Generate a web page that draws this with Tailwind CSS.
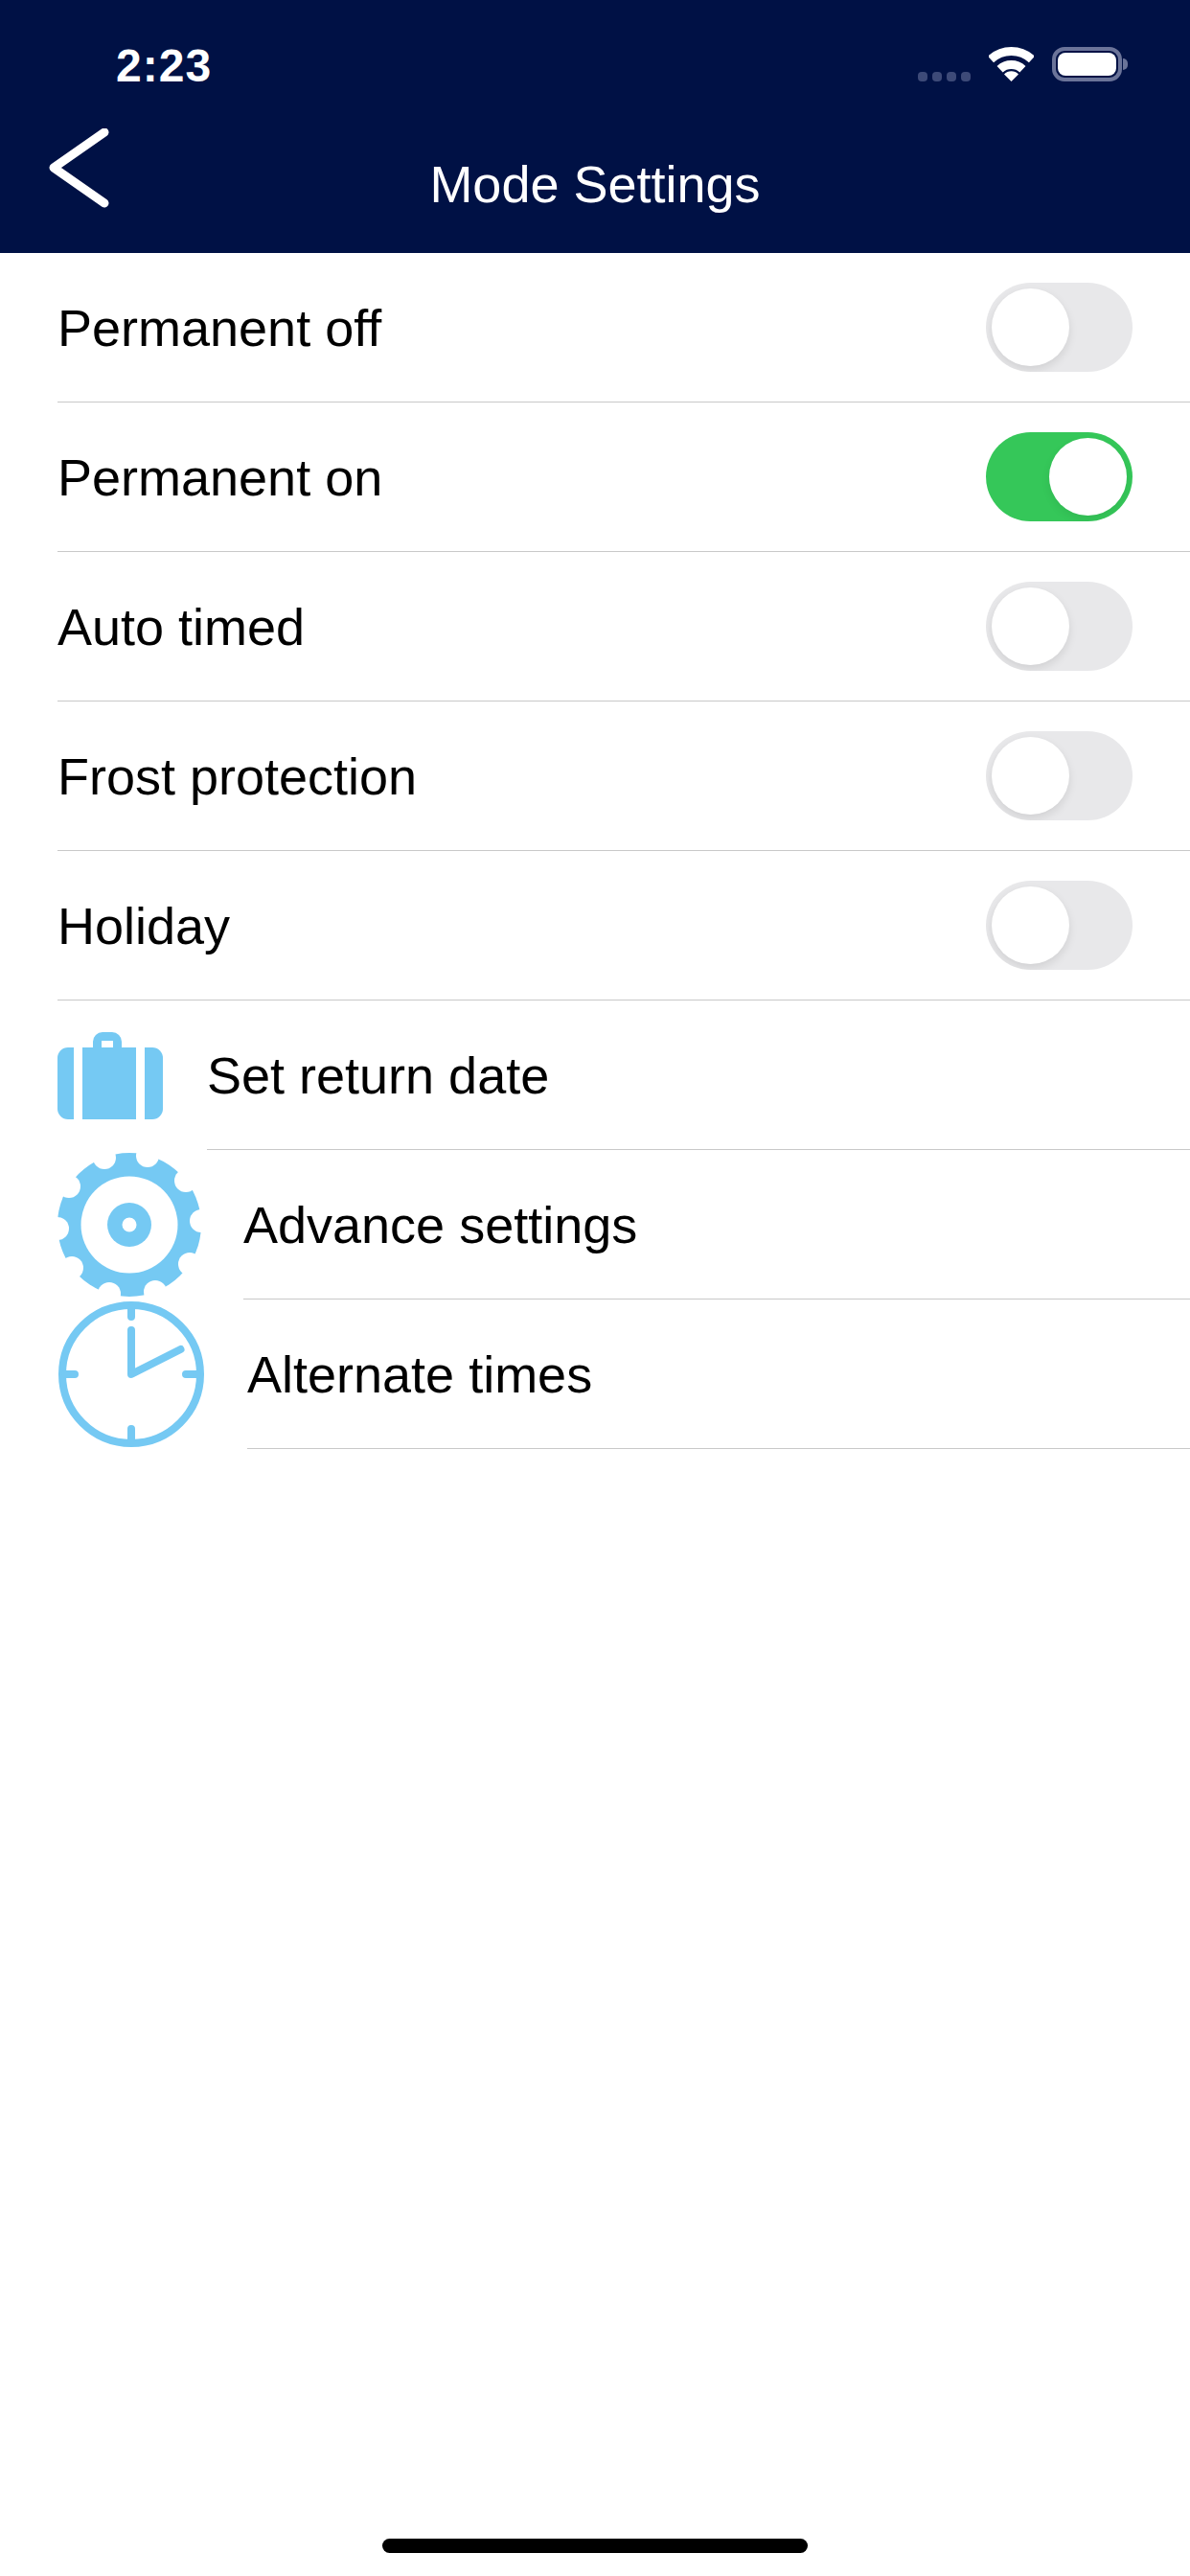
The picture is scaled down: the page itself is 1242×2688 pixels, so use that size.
<!DOCTYPE html>
<html lang="en">
<head>
    <meta charset="UTF-8">
    <meta name="viewport" content="width=device-width, initial-scale=1.0">
    <title>Mode Settings</title>
    <script src="https://cdn.jsdelivr.net/npm/@tailwindcss/browser@4"></script>
</head>
<body class="bg-white font-['Liberation_Sans',Arial,sans-serif] text-black">
    <div class="w-[1242px] h-[2688px] flex flex-col overflow-hidden">
        <!-- status bar + nav -->
        <header class="bg-[#001145] text-white h-[264px] shrink-0 flex flex-col">
            <div class="flex items-center h-[36px] mt-[49px] pl-[121px]">
                <span class="text-[48px] leading-[36px] font-bold tracking-[1px] mt-[4px]">2:23</span>
                <div class="ml-auto flex items-center">
                    <div class="flex gap-[5px] self-end h-[10px] mr-[19px]">
                        <span class="w-[10px] h-[10px] rounded-[4px] bg-[#3d4a78]"></span>
                        <span class="w-[10px] h-[10px] rounded-[4px] bg-[#3d4a78]"></span>
                        <span class="w-[10px] h-[10px] rounded-[4px] bg-[#3d4a78]"></span>
                        <span class="w-[10px] h-[10px] rounded-[4px] bg-[#3d4a78]"></span>
                    </div>
                    <svg class="w-[47px] h-[36px] mr-[19px]" viewBox="0 0 47 36" fill="none">
                        <path d="M2 13A31.5 31.5 0 0 1 45 13" stroke="#fff" stroke-width="9"/>
                        <path d="M11.6 23.2A17.5 17.5 0 0 1 35.4 23.2" stroke="#fff" stroke-width="9"/>
                        <path d="M23.5 36L16 28.5A10.5 10.5 0 0 1 31 28.5Z" fill="#fff"/>
                    </svg>
                    <div class="w-[73px] h-[36px] rounded-[13px] border-[4px] border-[#6b7499] p-[2px] flex">
                        <div class="flex-1 bg-white rounded-[8px]"></div>
                    </div>
                    <div class="w-[5px] h-[12px] bg-[#6b7499] rounded-r-[6px] ml-[1px] mr-[65px]"></div>
                </div>
            </div>
            <div class="grid grid-cols-[1fr_auto_1fr] mt-[49px]">
                <svg class="w-[72px] h-[90px] ml-[47px]" viewBox="0 0 72 90" fill="none">
                    <path d="M62 4L9 41L62 78" stroke="#fff" stroke-width="9" stroke-linecap="round" stroke-linejoin="round"/>
                </svg>
                <h1 class="text-[54px] leading-[62px] font-normal mt-[27px]">Mode Settings</h1>
                <div></div>
            </div>
        </header>

        <!-- toggle rows -->
        <div class="h-[156px] ml-[60px] border-b-[1.5px] border-[#c9c9c9] flex items-center pr-[60px]">
            <span class="text-[54px] pt-[2px]">Permanent off</span>
            <div class="ml-auto w-[153px] h-[93px] rounded-full bg-[#e8e8ea] overflow-hidden flex items-center justify-start px-[6px]">
                <div class="w-[81px] h-[81px] rounded-full bg-white shadow-[0_4px_10px_rgba(0,0,0,0.1)]"></div>
            </div>
        </div>
        <div class="h-[156px] ml-[60px] border-b-[1.5px] border-[#c9c9c9] flex items-center pr-[60px]">
            <span class="text-[54px] pt-[2px]">Permanent on</span>
            <div class="ml-auto w-[153px] h-[93px] rounded-full bg-[#35c759] overflow-hidden flex items-center justify-end px-[6px]">
                <div class="w-[81px] h-[81px] rounded-full bg-white shadow-[0_4px_10px_rgba(0,0,0,0.07)]"></div>
            </div>
        </div>
        <div class="h-[156px] ml-[60px] border-b-[1.5px] border-[#c9c9c9] flex items-center pr-[60px]">
            <span class="text-[54px] pt-[2px]">Auto timed</span>
            <div class="ml-auto w-[153px] h-[93px] rounded-full bg-[#e8e8ea] overflow-hidden flex items-center justify-start px-[6px]">
                <div class="w-[81px] h-[81px] rounded-full bg-white shadow-[0_4px_10px_rgba(0,0,0,0.1)]"></div>
            </div>
        </div>
        <div class="h-[156px] ml-[60px] border-b-[1.5px] border-[#c9c9c9] flex items-center pr-[60px]">
            <span class="text-[54px] pt-[2px]">Frost protection</span>
            <div class="ml-auto w-[153px] h-[93px] rounded-full bg-[#e8e8ea] overflow-hidden flex items-center justify-start px-[6px]">
                <div class="w-[81px] h-[81px] rounded-full bg-white shadow-[0_4px_10px_rgba(0,0,0,0.1)]"></div>
            </div>
        </div>
        <div class="h-[156px] ml-[60px] border-b-[1.5px] border-[#c9c9c9] flex items-center pr-[60px]">
            <span class="text-[54px] pt-[2px]">Holiday</span>
            <div class="ml-auto w-[153px] h-[93px] rounded-full bg-[#e8e8ea] overflow-hidden flex items-center justify-start px-[6px]">
                <div class="w-[81px] h-[81px] rounded-full bg-white shadow-[0_4px_10px_rgba(0,0,0,0.1)]"></div>
            </div>
        </div>

        <!-- icon rows -->
        <div class="h-[156px] pl-[60px] flex items-center">
            <svg class="w-[110px] h-[91px] mr-[46px] shrink-0" viewBox="0 0 110 91">
                <path fill="#75c9f3" d="M11 16H17V91H11A11 11 0 0 1 0 80V27A11 11 0 0 1 11 16Z"/>
                <path fill="#75c9f3" fill-rule="evenodd" d="M26 16H37V10A10 10 0 0 1 47 0H57A10 10 0 0 1 67 10V16H82V91H26ZM46 9V16H58V9Z"/>
                <path fill="#75c9f3" d="M91 16H99A11 11 0 0 1 110 27V80A11 11 0 0 1 99 91H91Z"/>
            </svg>
            <div class="flex-1 h-full flex items-center border-b-[1.5px] border-[#c9c9c9]">
                <span class="text-[54px] pt-[2px]">Set return date</span>
            </div>
        </div>
        <div class="h-[156px] pl-[60px] flex items-center">
            <svg class="w-[150px] h-[150px] mr-[44px] shrink-0" viewBox="-75 -75 150 150">
                <mask id="gearMask">
                    <rect x="-75" y="-75" width="150" height="150" fill="#fff"/>
                    <circle cx="19" cy="-72" r="12" fill="#000"/>
                    <circle cx="59" cy="-46" r="12" fill="#000"/>
                    <circle cx="75" cy="-4" r="12" fill="#000"/>
                    <circle cx="63" cy="41" r="12" fill="#000"/>
                    <circle cx="27" cy="70" r="12" fill="#000"/>
                    <circle cx="-21" cy="72" r="12" fill="#000"/>
                    <circle cx="-60" cy="45" r="12" fill="#000"/>
                    <circle cx="-75" cy="4" r="12" fill="#000"/>
                    <circle cx="-63" cy="-40" r="12" fill="#000"/>
                    <circle cx="-26" cy="-70" r="12" fill="#000"/>
                    <circle cx="0" cy="0" r="50.5" fill="#000"/>
                    <circle cx="0" cy="0" r="23" fill="#fff"/>
                    <circle cx="0" cy="0" r="7.5" fill="#000"/>
                </mask>
                <circle cx="0" cy="0" r="75" fill="#75c9f3" mask="url(#gearMask)"/>
            </svg>
            <div class="flex-1 h-full flex items-center border-b-[1.5px] border-[#c9c9c9]">
                <span class="text-[54px] pt-[2px]">Advance settings</span>
            </div>
        </div>
        <div class="h-[156px] pl-[60px] flex items-center">
            <svg class="w-[154px] h-[154px] mr-[44px] shrink-0" viewBox="0 0 154 154" fill="none" stroke="#75c9f3" stroke-linecap="round" stroke-linejoin="round">
                <circle cx="77" cy="77" r="72" stroke-width="8"/>
                <path d="M77 8V17M77 134V146M8 77H18M134 77H146" stroke-width="8"/>
                <path d="M77 31V77L128.5 51" stroke-width="8"/>
            </svg>
            <div class="flex-1 h-full flex items-center border-b-[1.5px] border-[#c9c9c9]">
                <span class="text-[54px] pt-[2px]">Alternate times</span>
            </div>
        </div>

        <!-- home indicator -->
        <div class="mt-auto mb-[24px] flex justify-center">
            <div class="w-[444px] h-[15px] bg-black rounded-full"></div>
        </div>
    </div>
</body>
</html>
